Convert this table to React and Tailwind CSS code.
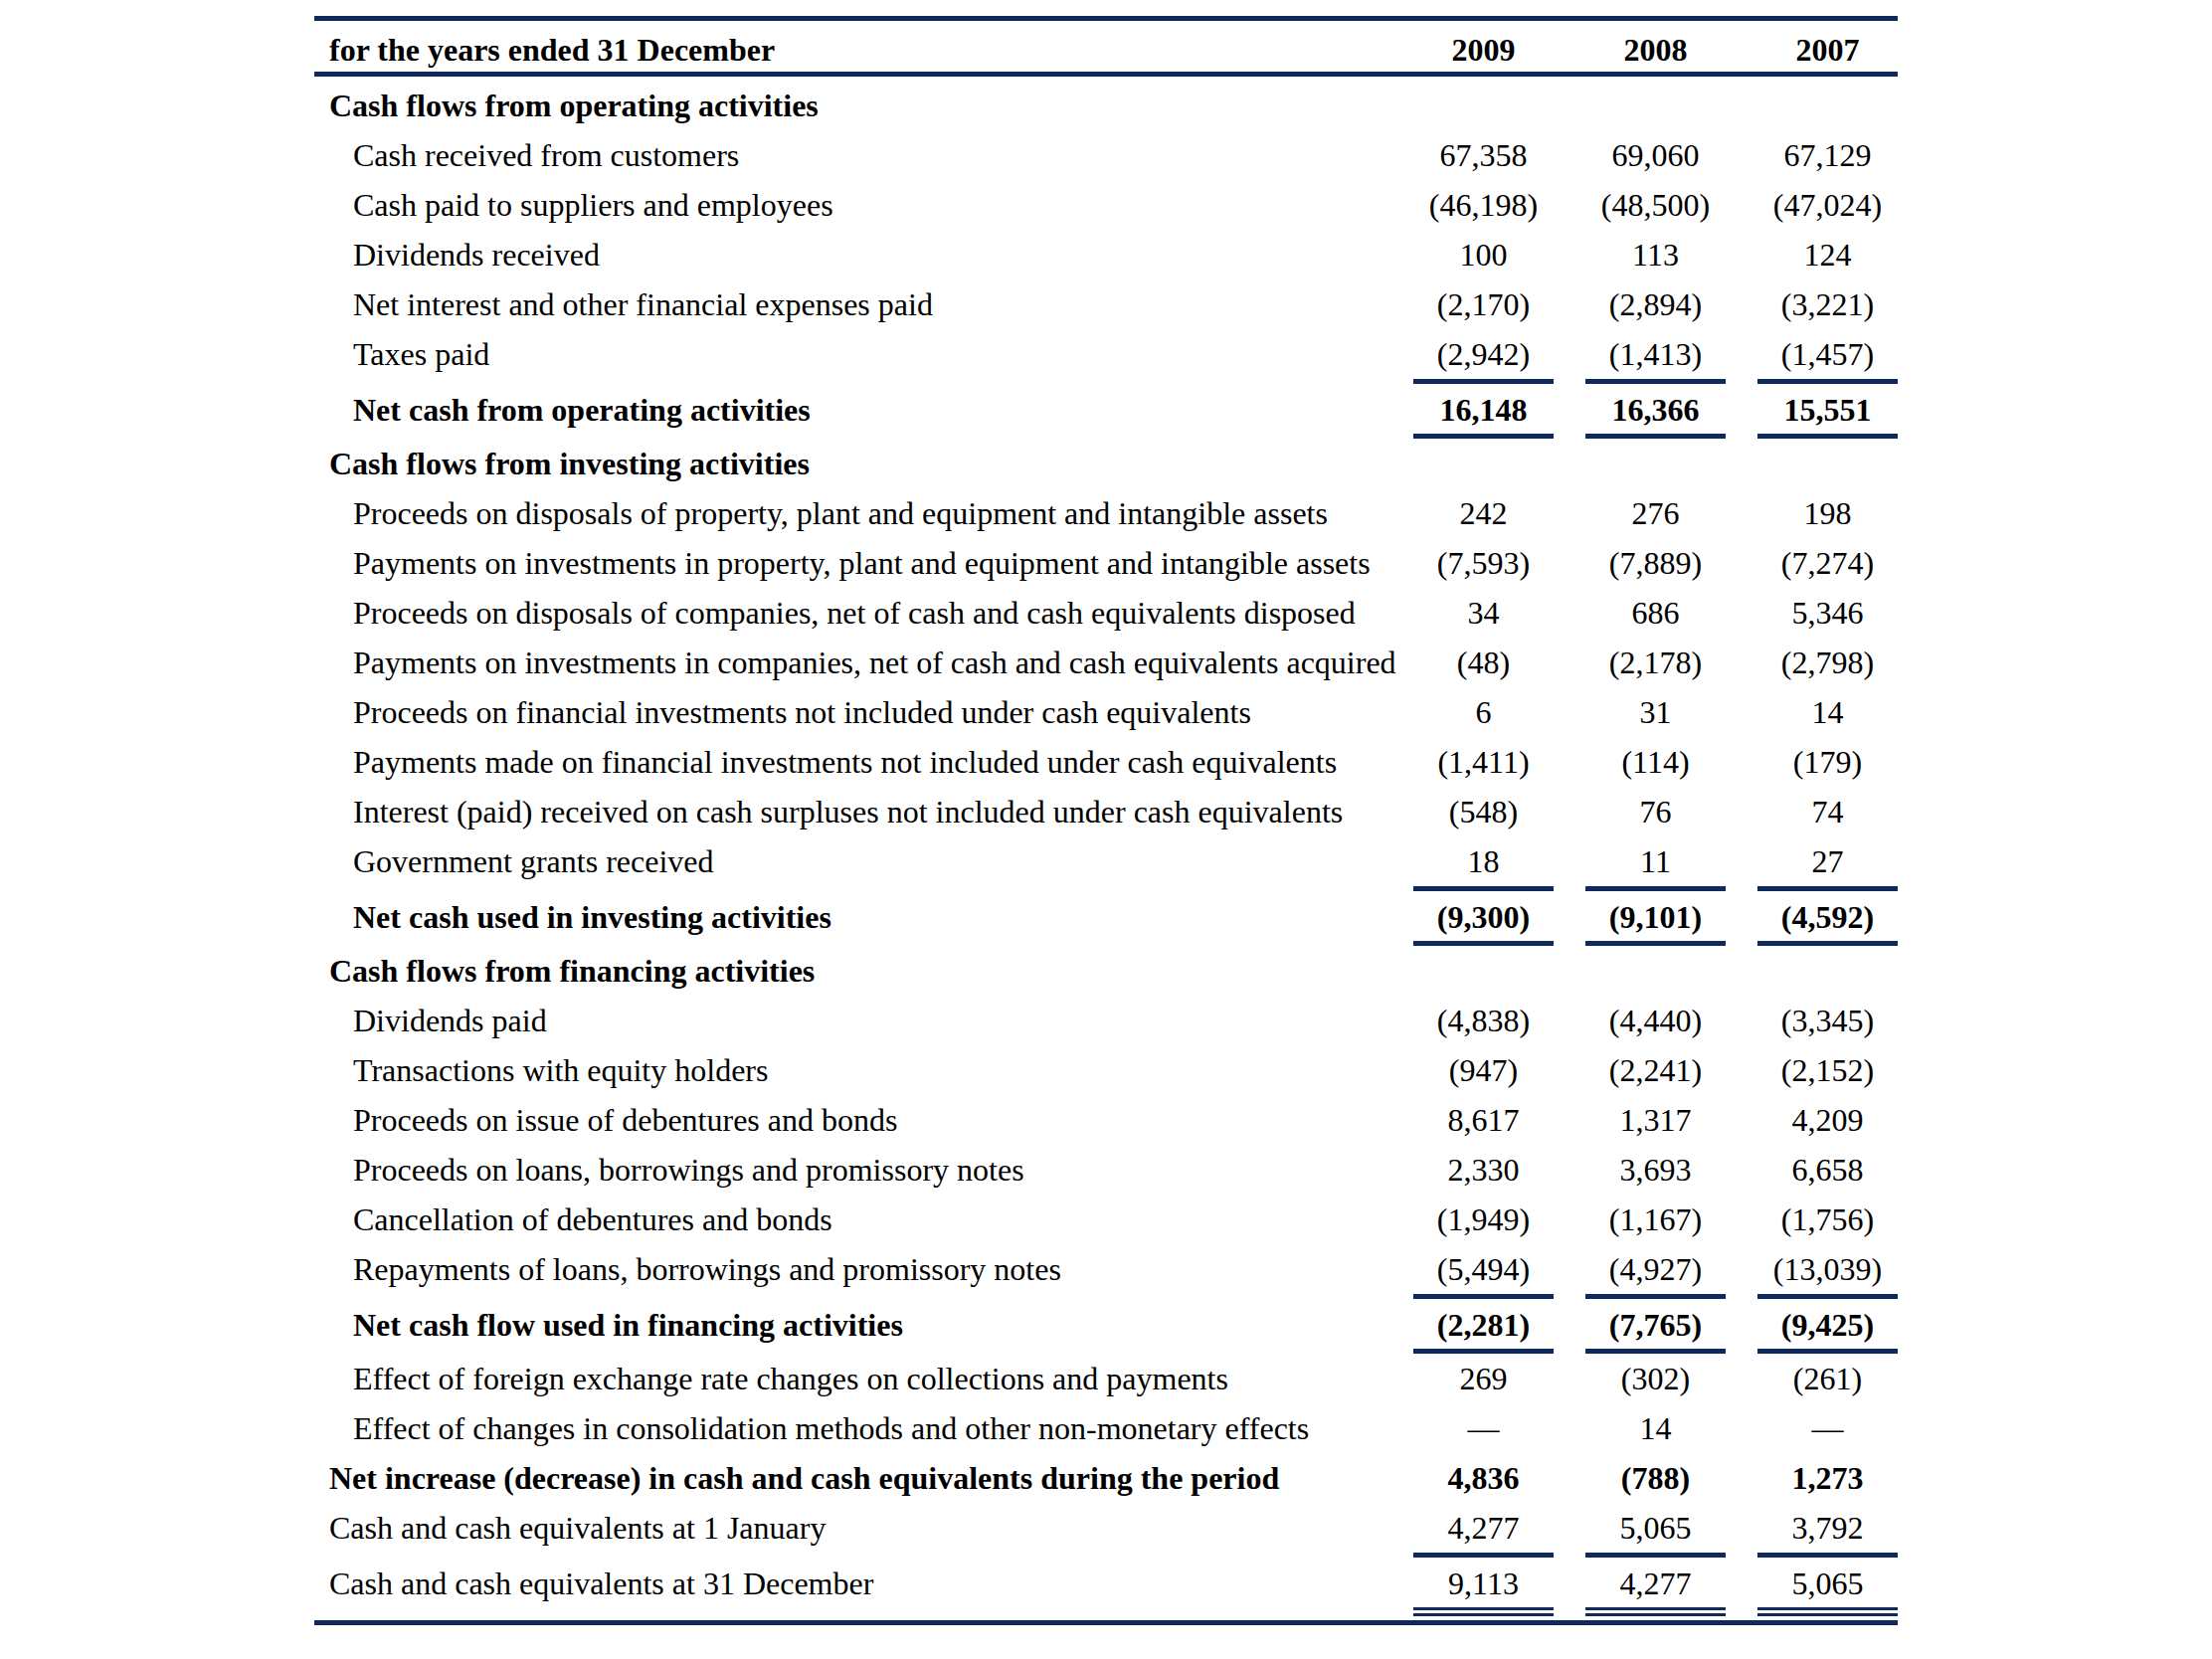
const rows = [
  { label: "Cash flows from operating activities", kind: "section" },
  { label: "Cash received from customers", values: ["67,358", "69,060", "67,129"] },
  { label: "Cash paid to suppliers and employees", values: ["(46,198)", "(48,500)", "(47,024)"] },
  { label: "Dividends received", values: ["100", "113", "124"] },
  { label: "Net interest and other financial expenses paid", values: ["(2,170)", "(2,894)", "(3,221)"] },
  { label: "Taxes paid", values: ["(2,942)", "(1,413)", "(1,457)"], line: "single" },
  { label: "Net cash from operating activities", values: ["16,148", "16,366", "15,551"], bold: true, line: "single", drop: true },

  { label: "Cash flows from investing activities", kind: "section" },
  { label: "Proceeds on disposals of property, plant and equipment and intangible assets", values: ["242", "276", "198"] },
  { label: "Payments on investments in property, plant and equipment and intangible assets", values: ["(7,593)", "(7,889)", "(7,274)"] },
  { label: "Proceeds on disposals of companies, net of cash and cash equivalents disposed", values: ["34", "686", "5,346"] },
  { label: "Payments on investments in companies, net of cash and cash equivalents acquired", values: ["(48)", "(2,178)", "(2,798)"] },
  { label: "Proceeds on financial investments not included under cash equivalents", values: ["6", "31", "14"] },
  { label: "Payments made on financial investments not included under cash equivalents", values: ["(1,411)", "(114)", "(179)"] },
  { label: "Interest (paid) received on cash surpluses not included under cash equivalents", values: ["(548)", "76", "74"] },
  { label: "Government grants received", values: ["18", "11", "27"], line: "single" },
  { label: "Net cash used in investing activities", values: ["(9,300)", "(9,101)", "(4,592)"], bold: true, line: "single", drop: true },

  { label: "Cash flows from financing activities", kind: "section" },
  { label: "Dividends paid", values: ["(4,838)", "(4,440)", "(3,345)"] },
  { label: "Transactions with equity holders", values: ["(947)", "(2,241)", "(2,152)"] },
  { label: "Proceeds on issue of debentures and bonds", values: ["8,617", "1,317", "4,209"] },
  { label: "Proceeds on loans, borrowings and promissory notes", values: ["2,330", "3,693", "6,658"] },
  { label: "Cancellation of debentures and bonds", values: ["(1,949)", "(1,167)", "(1,756)"] },
  { label: "Repayments of loans, borrowings and promissory notes", values: ["(5,494)", "(4,927)", "(13,039)"], line: "single" },
  { label: "Net cash flow used in financing activities", values: ["(2,281)", "(7,765)", "(9,425)"], bold: true, line: "single", drop: true },
  { label: "Effect of foreign exchange rate changes on collections and payments", values: ["269", "(302)", "(261)"] },
  { label: "Effect of changes in consolidation methods and other non-monetary effects", values: ["—", "14", "—"] },

  { label: "Net increase (decrease) in cash and cash equivalents during the period", values: ["4,836", "(788)", "1,273"], bold: true, flush: true },
  { label: "Cash and cash equivalents at 1 January", values: ["4,277", "5,065", "3,792"], flush: true, line: "single" },
  { label: "Cash and cash equivalents at 31 December", values: ["9,113", "4,277", "5,065"], flush: true, line: "double", drop: true },
];

function Row({ row }) {
  // section titles sit flush left and carry no numbers
  if (row.kind === "section") {
    return (
      <div className="grid grid-cols-[minmax(0,1fr)_141px_141px_141px] gap-x-8 items-start">
        <div className="pl-[15px] leading-[50px] font-bold whitespace-nowrap">{row.label}</div>
      </div>
    );
  }

  const lineClass =
    row.line === "single"
      ? "border-b-[5px] border-[#0e2a5c]"
      : row.line === "double"
      ? "border-b-[9px] border-double border-[#0e2a5c]"
      : "";

  // rows sitting between two rules are set a little lower
  const lead = row.drop ? "pt-[3px] leading-[47px]" : "leading-[50px]";

  return (
    <div className="grid grid-cols-[minmax(0,1fr)_141px_141px_141px] gap-x-8 items-start">
      <div
        className={`${row.flush ? "pl-[15px]" : "pl-[39px]"} ${lead} whitespace-nowrap ${
          row.bold ? "font-bold" : ""
        }`}
      >
        {row.label}
      </div>
      {row.values.map((v, i) => (
        <div
          key={i}
          className={`text-center ${lead} ${row.bold ? "font-bold" : ""} ${lineClass}`}
        >
          {v}
        </div>
      ))}
    </div>
  );
}

export default function App() {
  return (
    <main className="min-h-screen bg-white pt-4 text-black font-['Liberation_Serif','Times_New_Roman',serif] text-[32px]">
      <div className="mx-auto w-[1592px] border-b-[5px] border-[#0e2a5c]">

        {/* header band */}
        <div className="grid grid-cols-[minmax(0,1fr)_141px_141px_141px] gap-x-8 border-y-[5px] border-[#0e2a5c] font-bold pt-2">
          <div className="pl-[15px] leading-[43px]">for the years ended 31 December</div>
          <div className="text-center leading-[43px]">2009</div>
          <div className="text-center leading-[43px]">2008</div>
          <div className="text-center leading-[43px]">2007</div>
        </div>

        <div className="pt-1 pb-1">
          {rows.map((row, i) => (
            <Row key={i} row={row} />
          ))}
        </div>

      </div>
    </main>
  );
}
